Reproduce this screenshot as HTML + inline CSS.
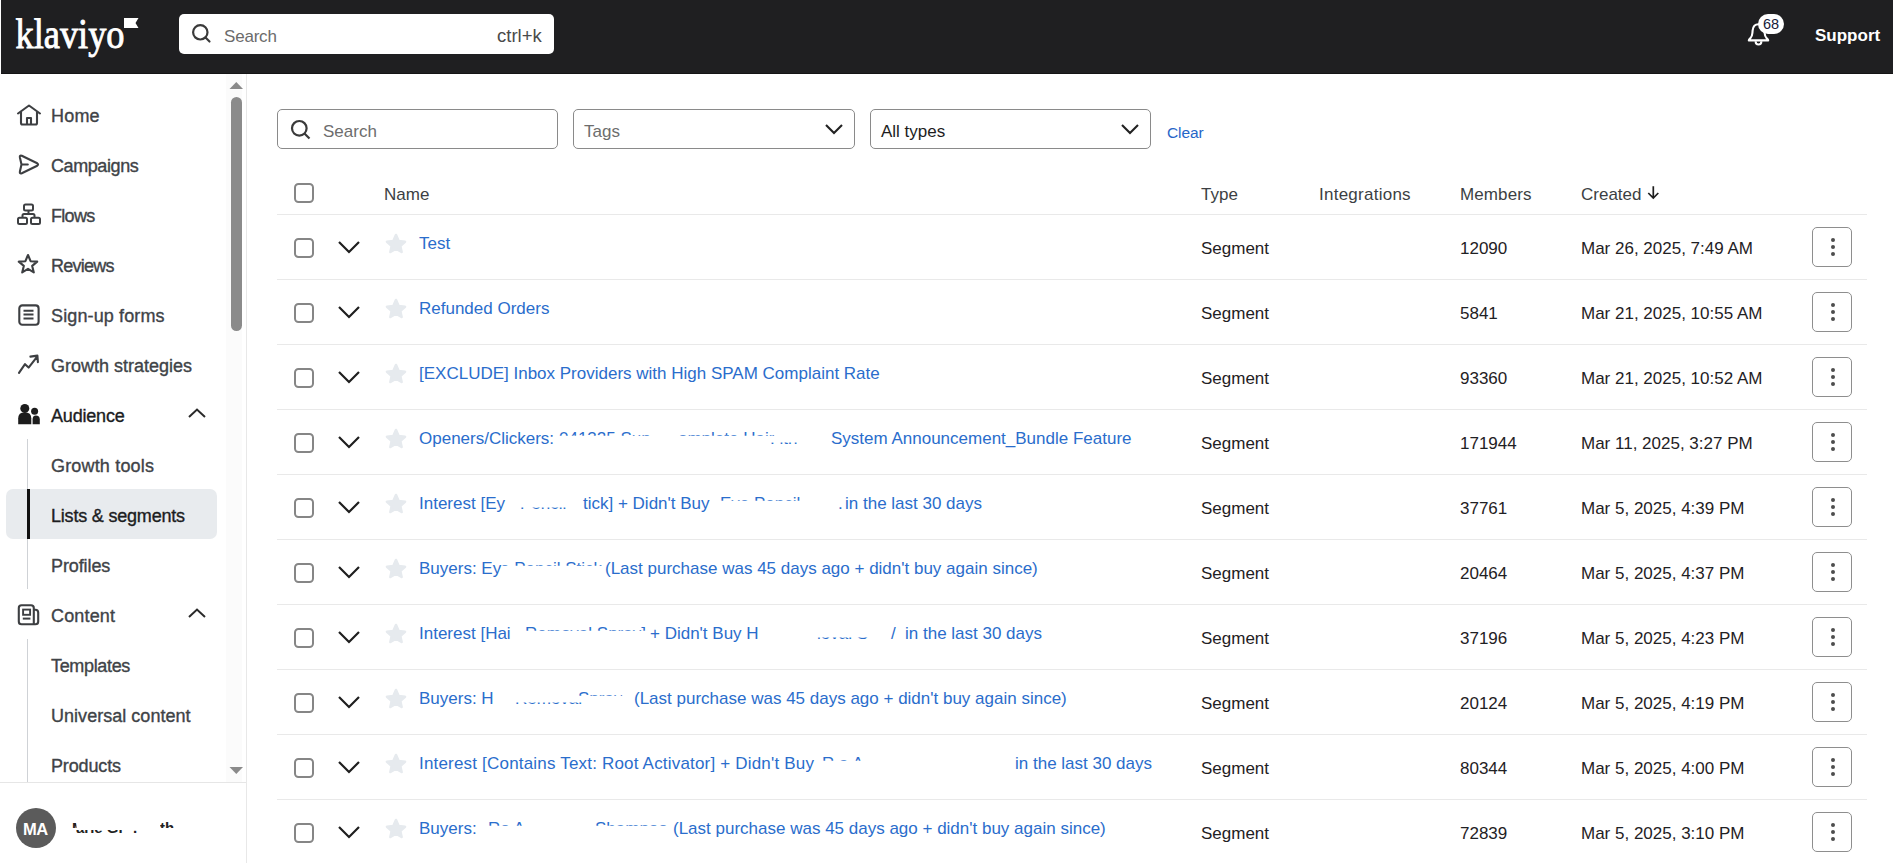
<!DOCTYPE html>
<html><head><meta charset="utf-8">
<style>
*{box-sizing:border-box;margin:0;padding:0}
html,body{width:1893px;height:863px;overflow:hidden;background:#fff;font-family:"Liberation Sans",sans-serif;color:#1f2124}
.abs{position:absolute}
.t{position:absolute;white-space:nowrap;font-size:17px;line-height:20px}
.nav{position:absolute;left:51px;font-size:18px;line-height:20px;color:#383b3f;white-space:nowrap}
.ln{position:absolute;left:277px;width:1590px;height:1px;background:#e9e9e9}
.cb{position:absolute;left:294px;width:20px;height:20px;border:2px solid #868686;border-radius:4.5px}
.kb{position:absolute;left:1812px;width:40px;height:40px;border:1px solid #8e8e8e;border-radius:5px;background:#fff}
.kb i{position:absolute;left:17.8px;width:4.2px;height:4.2px;border-radius:50%;background:#4d4d4d}
.lnk{color:#2a6dcc}
.inp{position:absolute;top:109px;height:40px;border:1px solid #8a8a8a;border-radius:5px;background:#fff}
.w{position:absolute;background:#fff}
</style></head><body>

<div class="abs" style="left:1px;top:0;width:1892px;height:74px;background:#1f1f21;border-bottom:1px solid #141415"></div>
<svg class="abs" style="left:10px;top:10px" width="135" height="52" viewBox="0 0 135 52"><text x="5.5" y="37.5" font-family="Liberation Serif" font-size="42" fill="#fff" stroke="#fff" stroke-width="0.9" textLength="109" lengthAdjust="spacingAndGlyphs">klaviyo</text><path d="M114 8 H128.5 L125.5 13 L128.5 18 H114 Z" fill="#fff"/></svg>
<div class="abs" style="left:179px;top:14px;width:375px;height:40px;background:#fff;border-radius:5px"></div>
<svg class="abs" style="left:190px;top:22px" width="24" height="24" viewBox="0 0 24 24"><circle cx="10.3" cy="10.3" r="7.2" fill="none" stroke="#3a3a3a" stroke-width="2.2"/><line x1="15.5" y1="15.5" x2="19.5" y2="19.5" stroke="#3a3a3a" stroke-width="2.2" stroke-linecap="round"/></svg>
<div class="t" style="left:224px;top:27px;color:#6b6b6b;letter-spacing:-0.2px">Search</div>
<div class="t" style="left:497px;top:26px;color:#4a4a4a;font-size:18.5px">ctrl+k</div>
<svg class="abs" style="left:1745px;top:22px" width="28" height="28" viewBox="0 0 28 28"><path d="M3.8 18.4 Q3.8 17.6 5.2 16.4 Q7.2 14.4 7.4 11 L7.6 8.6 Q8.2 2.3 13.5 2.3 Q18.8 2.3 19.4 8.6 L19.6 11 Q19.8 14.4 21.8 16.4 Q23.2 17.6 23.2 18.4 Z" fill="none" stroke="#fff" stroke-width="2.1" stroke-linejoin="round"/><path d="M10.6 19.2 Q10.6 22.6 13.5 22.6 Q16.4 22.6 16.4 19.2" fill="none" stroke="#fff" stroke-width="2"/></svg>
<div class="abs" style="left:1758px;top:14px;width:26px;height:20px;border-radius:10px;background:#fff"></div>
<div class="t" style="left:1763px;top:14px;font-size:14.5px;color:#16203a">68</div>
<div class="t" style="left:1815px;top:26px;color:#fff;font-weight:bold">Support</div>
<div class="abs" style="left:226px;top:74px;width:16px;height:708px;background:#fbfbfb"></div>
<div class="abs" style="left:246px;top:74px;width:1px;height:789px;background:#e8e8e8"></div>
<div class="abs" style="left:6px;top:489px;width:211px;height:50px;border-radius:7px;background:#e8ebee"></div>
<div class="abs" style="left:27px;top:439px;width:1px;height:150px;background:#cfd2d6"></div>
<div class="abs" style="left:27px;top:489px;width:3px;height:50px;background:#111"></div>
<div class="abs" style="left:27px;top:639px;width:1px;height:143px;background:#cfd2d6"></div>
<div class="nav" style="top:106px;color:#404347;-webkit-text-stroke:0.35px #404347;letter-spacing:0.2px">Home</div>
<svg class="abs" style="left:16px;top:104px" width="26" height="22" viewBox="0 0 26 22"><path d="M2 9.5 L13 1.5 L24 9.5 M5 8 V19 Q5 20.5 6.5 20.5 H19.5 Q21 20.5 21 19 V8 M11 20.5 V14 H15 V20.5" fill="none" stroke="#3d3f42" stroke-width="2.1" stroke-linejoin="round" stroke-linecap="round"/></svg>
<div class="nav" style="top:156px;color:#404347;-webkit-text-stroke:0.35px #404347;letter-spacing:-0.412px">Campaigns</div>
<svg class="abs" style="left:16px;top:152px" width="24" height="24" viewBox="0 0 24 24"><path d="M5.5 12.5 L3.9 5.4 Q3.4 2.9 5.8 3.8 L21.2 11.3 Q22.9 12.5 21.2 13.7 L5.8 21.2 Q3.4 22.1 3.9 19.6 Z M5.5 12.5 H11.8" fill="none" stroke="#3d3f42" stroke-width="2.1" stroke-linejoin="round" stroke-linecap="round"/></svg>
<div class="nav" style="top:206px;color:#404347;-webkit-text-stroke:0.35px #404347;letter-spacing:-0.7px">Flows</div>
<svg class="abs" style="left:16px;top:202px" width="26" height="24" viewBox="0 0 26 24"><rect x="8" y="2.5" width="9" height="6" rx="1.5" fill="none" stroke="#3d3f42" stroke-width="2"/><rect x="2" y="15.8" width="9" height="6.2" rx="1.5" fill="none" stroke="#3d3f42" stroke-width="2"/><rect x="15" y="15.8" width="9" height="6.2" rx="1.5" fill="none" stroke="#3d3f42" stroke-width="2"/><path d="M12.5 8.5 V12 M6.5 15.8 V13.5 Q6.5 12 8 12 H17 Q18.5 12 18.5 13.5 V15.8" fill="none" stroke="#3d3f42" stroke-width="2"/></svg>
<div class="nav" style="top:256px;color:#404347;-webkit-text-stroke:0.35px #404347;letter-spacing:-0.75px">Reviews</div>
<svg class="abs" style="left:16px;top:252px" width="24" height="24" viewBox="0 0 24 24"><path d="M12 3 L14.6 9.2 L21.2 9.6 L16.2 13.9 L17.8 20.4 L12 16.9 L6.2 20.4 L7.8 13.9 L2.8 9.6 L9.4 9.2 Z" fill="none" stroke="#3d3f42" stroke-width="2.1" stroke-linejoin="round"/></svg>
<div class="nav" style="top:306px;color:#404347;-webkit-text-stroke:0.35px #404347;letter-spacing:0.125px">Sign-up forms</div>
<svg class="abs" style="left:16px;top:302px" width="24" height="24" viewBox="0 0 24 24"><rect x="3.3" y="3.4" width="19.3" height="19.3" rx="3" fill="none" stroke="#3d3f42" stroke-width="2.1"/><path d="M7.5 8.7 H17.5 M7.5 12.5 H17.5 M7.5 16.4 H17.5" stroke="#3d3f42" stroke-width="2"/></svg>
<div class="nav" style="top:356px;color:#404347;-webkit-text-stroke:0.35px #404347;letter-spacing:0.0px">Growth strategies</div>
<svg class="abs" style="left:16px;top:352px" width="24" height="24" viewBox="0 0 24 24"><path d="M3 20.8 L9 12.2 L12.6 15.6 L21.2 4.6 M14.4 4.6 L21.4 3.6 L21.9 10.2" fill="none" stroke="#3d3f42" stroke-width="2.1" stroke-linejoin="round" stroke-linecap="round"/></svg>
<div class="nav" style="top:406px;color:#1c1d1f;-webkit-text-stroke:0.35px #1c1d1f;letter-spacing:-0.186px">Audience</div>
<svg class="abs" style="left:16px;top:400px" width="26" height="26" viewBox="0 0 26 26"><circle cx="8.8" cy="8.4" r="4.5" fill="#1c1c1c"/><path d="M2.2 24.2 V18.3 Q2.2 12.2 8.8 12.2 Q15.3 12.2 15.3 18.3 V24.2 Z" fill="#1c1c1c"/><circle cx="18.6" cy="11.2" r="3.5" fill="#1c1c1c"/><path d="M16.6 24.2 V19.2 Q16.6 15.4 19.8 15.4 Q23.8 15.4 23.8 19.6 V24.2 Z" fill="#1c1c1c"/></svg>
<div class="nav" style="top:456px;color:#404347;-webkit-text-stroke:0.35px #404347;letter-spacing:0.173px">Growth tools</div>
<div class="nav" style="top:506px;color:#1c1d1f;-webkit-text-stroke:0.35px #1c1d1f;letter-spacing:-0.2px">Lists &amp; segments</div>
<div class="nav" style="top:556px;color:#404347;-webkit-text-stroke:0.35px #404347;letter-spacing:-0.1px">Profiles</div>
<div class="nav" style="top:606px;color:#404347;-webkit-text-stroke:0.35px #404347;letter-spacing:0.167px">Content</div>
<svg class="abs" style="left:16px;top:602px" width="26" height="26" viewBox="0 0 26 26"><path d="M5.5 3.3 H15 Q17.8 3.3 17.8 6 V22.3 H5.5 Q2.8 22.3 2.8 19.5 V6 Q2.8 3.3 5.5 3.3 Z M17.8 7.8 H19.4 Q22.2 7.8 22.2 10.6 V19.5 Q22.2 22.3 19.4 22.3 H17.8" fill="none" stroke="#3d3f42" stroke-width="2.1" stroke-linejoin="round"/><rect x="7.1" y="7.6" width="7" height="5.2" fill="none" stroke="#3d3f42" stroke-width="1.9"/><path d="M6.8 16.6 H14.4" stroke="#3d3f42" stroke-width="2"/></svg>
<div class="nav" style="top:656px;color:#404347;-webkit-text-stroke:0.35px #404347;letter-spacing:-0.338px">Templates</div>
<div class="nav" style="top:706px;color:#404347;-webkit-text-stroke:0.35px #404347;letter-spacing:0.031px">Universal content</div>
<div class="nav" style="top:756px;color:#404347;-webkit-text-stroke:0.35px #404347;letter-spacing:-0.143px">Products</div>
<svg class="abs" style="left:186px;top:406px" width="22" height="14" viewBox="0 0 22 14"><path d="M3 11 L11 3.5 L19 11" fill="none" stroke="#2a2a2a" stroke-width="2"/></svg>
<svg class="abs" style="left:186px;top:606px" width="22" height="14" viewBox="0 0 22 14"><path d="M3 11 L11 3.5 L19 11" fill="none" stroke="#2a2a2a" stroke-width="2"/></svg>
<svg class="abs" style="left:229px;top:81px" width="15" height="9" viewBox="0 0 15 9"><path d="M0.5 8 L7.3 1 L14 8 Z" fill="#8a8a8a"/></svg>
<div class="abs" style="left:231px;top:97px;width:11px;height:234px;border-radius:6px;background:#8b8b8b"></div>
<svg class="abs" style="left:229px;top:766px" width="15" height="9" viewBox="0 0 15 9"><path d="M0.5 1 L7.3 8 L14 1 Z" fill="#8a8a8a"/></svg>
<div class="abs" style="left:0;top:782px;width:246px;height:1px;background:#e6e6e6"></div>
<div class="abs" style="left:16px;top:808px;width:40px;height:40px;border-radius:50%;background:#5b5b5b"></div>
<div class="t" style="left:23px;top:819px;color:#fff;font-weight:bold;font-size:16.5px;letter-spacing:-0.6px">MA</div>
<div class="t" style="left:72px;top:818px;color:#222;font-weight:bold;font-size:15px;clip-path:inset(5px 8px 10px 0)">M</div>
<div class="t" style="left:76px;top:818px;color:#222;font-weight:bold;font-size:15px;clip-path:inset(12px 0 0 0)">arie Gr</div>
<div class="t" style="left:133px;top:818px;color:#222;font-weight:bold;font-size:15px;clip-path:inset(12px 0 0 0)">.</div>
<div class="t" style="left:160px;top:818px;color:#222;font-weight:bold;font-size:15px;clip-path:inset(4px 0 10px 0)">th</div>
<div class="inp" style="left:277px;width:281px"></div>
<svg class="abs" style="left:289px;top:118px" width="24" height="24" viewBox="0 0 24 24"><circle cx="10.3" cy="10.3" r="7.3" fill="none" stroke="#3a3a3a" stroke-width="2.2"/><line x1="15.5" y1="15.5" x2="20.5" y2="20.5" stroke="#3a3a3a" stroke-width="2.2"/></svg>
<div class="t" style="left:323px;top:122px;color:#6d6d6d">Search</div>
<div class="inp" style="left:573px;width:282px"></div>
<div class="t" style="left:584px;top:122px;color:#6d6d6d">Tags</div>
<svg class="abs" style="left:822px;top:121px" width="24" height="16" viewBox="0 0 24 16"><path d="M4 4 L12 12 L20 4" fill="none" stroke="#222" stroke-width="2.1"/></svg>
<div class="inp" style="left:870px;width:281px"></div>
<div class="t" style="left:881px;top:122px;color:#1d1d1d">All types</div>
<svg class="abs" style="left:1118px;top:121px" width="24" height="16" viewBox="0 0 24 16"><path d="M4 4 L12 12 L20 4" fill="none" stroke="#222" stroke-width="2.1"/></svg>
<div class="t lnk" style="left:1167px;top:123px;font-size:15.5px;letter-spacing:-0.1px;color:#2666c8">Clear</div>
<div class="cb" style="top:183px"></div>
<div class="t" style="left:384px;top:185px;color:#3c3f43;letter-spacing:0px">Name</div>
<div class="t" style="left:1201px;top:185px;color:#3c3f43;letter-spacing:0px">Type</div>
<div class="t" style="left:1319px;top:185px;color:#3c3f43;letter-spacing:0.25px">Integrations</div>
<div class="t" style="left:1460px;top:185px;color:#3c3f43;letter-spacing:0.1px">Members</div>
<div class="t" style="left:1581px;top:185px;color:#3c3f43;letter-spacing:0px">Created</div>
<svg class="abs" style="left:1645px;top:184px" width="16" height="18" viewBox="0 0 16 18"><path d="M8.3 2.2 V14.2 M3.3 9 L8.3 14 L13.3 9" fill="none" stroke="#1e1e1e" stroke-width="1.7"/></svg>
<div class="ln" style="top:214px"></div>
<div class="cb" style="top:238px"></div>
<svg class="abs" style="left:336px;top:239px" width="26" height="16" viewBox="0 0 26 16"><path d="M3 3 L13 13 L23 3" fill="none" stroke="#1f1f1f" stroke-width="2.2"/></svg>
<svg class="abs" style="left:384px;top:232px" width="24" height="22" viewBox="0 0 24 22"><path d="M12 3 L14.6 9.1 L21 9.7 L16.2 13.9 L17.6 20 L12 16.7 L6.4 20 L7.8 13.9 L3 9.7 L9.4 9.1 Z" fill="#e6eaee" stroke="#e6eaee" stroke-width="2.6" stroke-linejoin="round"/></svg>
<div class="t lnk" style="left:419px;top:234px;">Test</div>
<div class="t" style="left:1201px;top:239px">Segment</div>
<div class="t" style="left:1460px;top:239px">12090</div>
<div class="t" style="left:1581px;top:239px">Mar 26, 2025, 7:49 AM</div>
<div class="kb" style="top:227px"><i style="top:10px"></i><i style="top:17px"></i><i style="top:24px"></i></div>
<div class="ln" style="top:279px"></div>
<div class="cb" style="top:303px"></div>
<svg class="abs" style="left:336px;top:304px" width="26" height="16" viewBox="0 0 26 16"><path d="M3 3 L13 13 L23 3" fill="none" stroke="#1f1f1f" stroke-width="2.2"/></svg>
<svg class="abs" style="left:384px;top:297px" width="24" height="22" viewBox="0 0 24 22"><path d="M12 3 L14.6 9.1 L21 9.7 L16.2 13.9 L17.6 20 L12 16.7 L6.4 20 L7.8 13.9 L3 9.7 L9.4 9.1 Z" fill="#e6eaee" stroke="#e6eaee" stroke-width="2.6" stroke-linejoin="round"/></svg>
<div class="t lnk" style="left:419px;top:299px;">Refunded Orders</div>
<div class="t" style="left:1201px;top:304px">Segment</div>
<div class="t" style="left:1460px;top:304px">5841</div>
<div class="t" style="left:1581px;top:304px">Mar 21, 2025, 10:55 AM</div>
<div class="kb" style="top:292px"><i style="top:10px"></i><i style="top:17px"></i><i style="top:24px"></i></div>
<div class="ln" style="top:344px"></div>
<div class="cb" style="top:368px"></div>
<svg class="abs" style="left:336px;top:369px" width="26" height="16" viewBox="0 0 26 16"><path d="M3 3 L13 13 L23 3" fill="none" stroke="#1f1f1f" stroke-width="2.2"/></svg>
<svg class="abs" style="left:384px;top:362px" width="24" height="22" viewBox="0 0 24 22"><path d="M12 3 L14.6 9.1 L21 9.7 L16.2 13.9 L17.6 20 L12 16.7 L6.4 20 L7.8 13.9 L3 9.7 L9.4 9.1 Z" fill="#e6eaee" stroke="#e6eaee" stroke-width="2.6" stroke-linejoin="round"/></svg>
<div class="t lnk" style="left:419px;top:364px;">[EXCLUDE] Inbox Providers with High SPAM Complaint Rate</div>
<div class="t" style="left:1201px;top:369px">Segment</div>
<div class="t" style="left:1460px;top:369px">93360</div>
<div class="t" style="left:1581px;top:369px">Mar 21, 2025, 10:52 AM</div>
<div class="kb" style="top:357px"><i style="top:10px"></i><i style="top:17px"></i><i style="top:24px"></i></div>
<div class="ln" style="top:409px"></div>
<div class="cb" style="top:433px"></div>
<svg class="abs" style="left:336px;top:434px" width="26" height="16" viewBox="0 0 26 16"><path d="M3 3 L13 13 L23 3" fill="none" stroke="#1f1f1f" stroke-width="2.2"/></svg>
<svg class="abs" style="left:384px;top:427px" width="24" height="22" viewBox="0 0 24 22"><path d="M12 3 L14.6 9.1 L21 9.7 L16.2 13.9 L17.6 20 L12 16.7 L6.4 20 L7.8 13.9 L3 9.7 L9.4 9.1 Z" fill="#e6eaee" stroke="#e6eaee" stroke-width="2.6" stroke-linejoin="round"/></svg>
<div class="t lnk" style="left:419px;top:429px;">Openers/Clickers:</div>
<div class="t lnk" style="left:559px;top:429px;clip-path:inset(0 0 66% 0);">041325 Sun</div>
<div class="t lnk" style="left:678px;top:429px;clip-path:inset(0 0 66% 0);">omplete Hair</div>
<div class="t lnk" style="left:770px;top:429px;clip-path:inset(68% 0 0 0);">. ith</div>
<div class="t lnk" style="left:831px;top:429px;">System Announcement_Bundle Feature</div>
<div class="t" style="left:1201px;top:434px">Segment</div>
<div class="t" style="left:1460px;top:434px">171944</div>
<div class="t" style="left:1581px;top:434px">Mar 11, 2025, 3:27 PM</div>
<div class="kb" style="top:422px"><i style="top:10px"></i><i style="top:17px"></i><i style="top:24px"></i></div>
<div class="ln" style="top:474px"></div>
<div class="cb" style="top:498px"></div>
<svg class="abs" style="left:336px;top:499px" width="26" height="16" viewBox="0 0 26 16"><path d="M3 3 L13 13 L23 3" fill="none" stroke="#1f1f1f" stroke-width="2.2"/></svg>
<svg class="abs" style="left:384px;top:492px" width="24" height="22" viewBox="0 0 24 22"><path d="M12 3 L14.6 9.1 L21 9.7 L16.2 13.9 L17.6 20 L12 16.7 L6.4 20 L7.8 13.9 L3 9.7 L9.4 9.1 Z" fill="#e6eaee" stroke="#e6eaee" stroke-width="2.6" stroke-linejoin="round"/></svg>
<div class="t lnk" style="left:419px;top:494px;">Interest [Ey</div>
<div class="t lnk" style="left:520px;top:494px;clip-path:inset(68% 0 0 0);">Pencil</div>
<div class="t lnk" style="left:583px;top:494px;">tick] + Didn't Buy</div>
<div class="t lnk" style="left:720px;top:494px;clip-path:inset(0 0 66% 0);">Eye Pencil</div>
<div class="t lnk" style="left:838px;top:494px;">.</div>
<div class="t lnk" style="left:845px;top:494px;">in the last 30 days</div>
<div class="t" style="left:1201px;top:499px">Segment</div>
<div class="t" style="left:1460px;top:499px">37761</div>
<div class="t" style="left:1581px;top:499px">Mar 5, 2025, 4:39 PM</div>
<div class="kb" style="top:487px"><i style="top:10px"></i><i style="top:17px"></i><i style="top:24px"></i></div>
<div class="ln" style="top:539px"></div>
<div class="cb" style="top:563px"></div>
<svg class="abs" style="left:336px;top:564px" width="26" height="16" viewBox="0 0 26 16"><path d="M3 3 L13 13 L23 3" fill="none" stroke="#1f1f1f" stroke-width="2.2"/></svg>
<svg class="abs" style="left:384px;top:557px" width="24" height="22" viewBox="0 0 24 22"><path d="M12 3 L14.6 9.1 L21 9.7 L16.2 13.9 L17.6 20 L12 16.7 L6.4 20 L7.8 13.9 L3 9.7 L9.4 9.1 Z" fill="#e6eaee" stroke="#e6eaee" stroke-width="2.6" stroke-linejoin="round"/></svg>
<div class="t lnk" style="left:419px;top:559px;">Buyers: Ey</div>
<div class="t lnk" style="left:500px;top:559px;clip-path:inset(0 0 66% 0);">e Pencil Stick</div>
<div class="t lnk" style="left:605px;top:559px;">(Last purchase was 45 days ago + didn't buy again since)</div>
<div class="t" style="left:1201px;top:564px">Segment</div>
<div class="t" style="left:1460px;top:564px">20464</div>
<div class="t" style="left:1581px;top:564px">Mar 5, 2025, 4:37 PM</div>
<div class="kb" style="top:552px"><i style="top:10px"></i><i style="top:17px"></i><i style="top:24px"></i></div>
<div class="ln" style="top:604px"></div>
<div class="cb" style="top:628px"></div>
<svg class="abs" style="left:336px;top:629px" width="26" height="16" viewBox="0 0 26 16"><path d="M3 3 L13 13 L23 3" fill="none" stroke="#1f1f1f" stroke-width="2.2"/></svg>
<svg class="abs" style="left:384px;top:622px" width="24" height="22" viewBox="0 0 24 22"><path d="M12 3 L14.6 9.1 L21 9.7 L16.2 13.9 L17.6 20 L12 16.7 L6.4 20 L7.8 13.9 L3 9.7 L9.4 9.1 Z" fill="#e6eaee" stroke="#e6eaee" stroke-width="2.6" stroke-linejoin="round"/></svg>
<div class="t lnk" style="left:419px;top:624px;">Interest [Hai</div>
<div class="t lnk" style="left:525px;top:624px;clip-path:inset(0 0 66% 0);">Removal Spray]</div>
<div class="t lnk" style="left:650px;top:624px;">+ Didn't Buy H</div>
<div class="t lnk" style="left:817px;top:624px;clip-path:inset(68% 0 0 0);">ioval S</div>
<div class="t lnk" style="left:891px;top:624px;">/</div>
<div class="t lnk" style="left:905px;top:624px;">in the last 30 days</div>
<div class="t" style="left:1201px;top:629px">Segment</div>
<div class="t" style="left:1460px;top:629px">37196</div>
<div class="t" style="left:1581px;top:629px">Mar 5, 2025, 4:23 PM</div>
<div class="kb" style="top:617px"><i style="top:10px"></i><i style="top:17px"></i><i style="top:24px"></i></div>
<div class="ln" style="top:669px"></div>
<div class="cb" style="top:693px"></div>
<svg class="abs" style="left:336px;top:694px" width="26" height="16" viewBox="0 0 26 16"><path d="M3 3 L13 13 L23 3" fill="none" stroke="#1f1f1f" stroke-width="2.2"/></svg>
<svg class="abs" style="left:384px;top:687px" width="24" height="22" viewBox="0 0 24 22"><path d="M12 3 L14.6 9.1 L21 9.7 L16.2 13.9 L17.6 20 L12 16.7 L6.4 20 L7.8 13.9 L3 9.7 L9.4 9.1 Z" fill="#e6eaee" stroke="#e6eaee" stroke-width="2.6" stroke-linejoin="round"/></svg>
<div class="t lnk" style="left:419px;top:689px;">Buyers: H</div>
<div class="t lnk" style="left:515px;top:689px;clip-path:inset(68% 0 0 0);">Removal</div>
<div class="t lnk" style="left:578px;top:689px;clip-path:inset(0 0 66% 0);">Spray</div>
<div class="t lnk" style="left:634px;top:689px;">(Last purchase was 45 days ago + didn't buy again since)</div>
<div class="t" style="left:1201px;top:694px">Segment</div>
<div class="t" style="left:1460px;top:694px">20124</div>
<div class="t" style="left:1581px;top:694px">Mar 5, 2025, 4:19 PM</div>
<div class="kb" style="top:682px"><i style="top:10px"></i><i style="top:17px"></i><i style="top:24px"></i></div>
<div class="ln" style="top:734px"></div>
<div class="cb" style="top:758px"></div>
<svg class="abs" style="left:336px;top:759px" width="26" height="16" viewBox="0 0 26 16"><path d="M3 3 L13 13 L23 3" fill="none" stroke="#1f1f1f" stroke-width="2.2"/></svg>
<svg class="abs" style="left:384px;top:752px" width="24" height="22" viewBox="0 0 24 22"><path d="M12 3 L14.6 9.1 L21 9.7 L16.2 13.9 L17.6 20 L12 16.7 L6.4 20 L7.8 13.9 L3 9.7 L9.4 9.1 Z" fill="#e6eaee" stroke="#e6eaee" stroke-width="2.6" stroke-linejoin="round"/></svg>
<div class="t lnk" style="left:419px;top:754px;letter-spacing:0.188px;">Interest [Contains Text: Root Activator] + Didn't Buy</div>
<div class="t lnk" style="left:822px;top:754px;clip-path:inset(0 0 66% 0);">R a A</div>
<div class="t lnk" style="left:1015px;top:754px;">in the last 30 days</div>
<div class="t" style="left:1201px;top:759px">Segment</div>
<div class="t" style="left:1460px;top:759px">80344</div>
<div class="t" style="left:1581px;top:759px">Mar 5, 2025, 4:00 PM</div>
<div class="kb" style="top:747px"><i style="top:10px"></i><i style="top:17px"></i><i style="top:24px"></i></div>
<div class="ln" style="top:799px"></div>
<div class="cb" style="top:823px"></div>
<svg class="abs" style="left:336px;top:824px" width="26" height="16" viewBox="0 0 26 16"><path d="M3 3 L13 13 L23 3" fill="none" stroke="#1f1f1f" stroke-width="2.2"/></svg>
<svg class="abs" style="left:384px;top:817px" width="24" height="22" viewBox="0 0 24 22"><path d="M12 3 L14.6 9.1 L21 9.7 L16.2 13.9 L17.6 20 L12 16.7 L6.4 20 L7.8 13.9 L3 9.7 L9.4 9.1 Z" fill="#e6eaee" stroke="#e6eaee" stroke-width="2.6" stroke-linejoin="round"/></svg>
<div class="t lnk" style="left:419px;top:819px;">Buyers:</div>
<div class="t lnk" style="left:488px;top:819px;clip-path:inset(0 0 66% 0);">Ro A</div>
<div class="t lnk" style="left:595px;top:819px;clip-path:inset(0 0 66% 0);">Shampoo</div>
<div class="t lnk" style="left:673px;top:819px;">(Last purchase was 45 days ago + didn't buy again since)</div>
<div class="t" style="left:1201px;top:824px">Segment</div>
<div class="t" style="left:1460px;top:824px">72839</div>
<div class="t" style="left:1581px;top:824px">Mar 5, 2025, 3:10 PM</div>
<div class="kb" style="top:812px"><i style="top:10px"></i><i style="top:17px"></i><i style="top:24px"></i></div>
<div class="ln" style="top:864px"></div>
</body></html>
